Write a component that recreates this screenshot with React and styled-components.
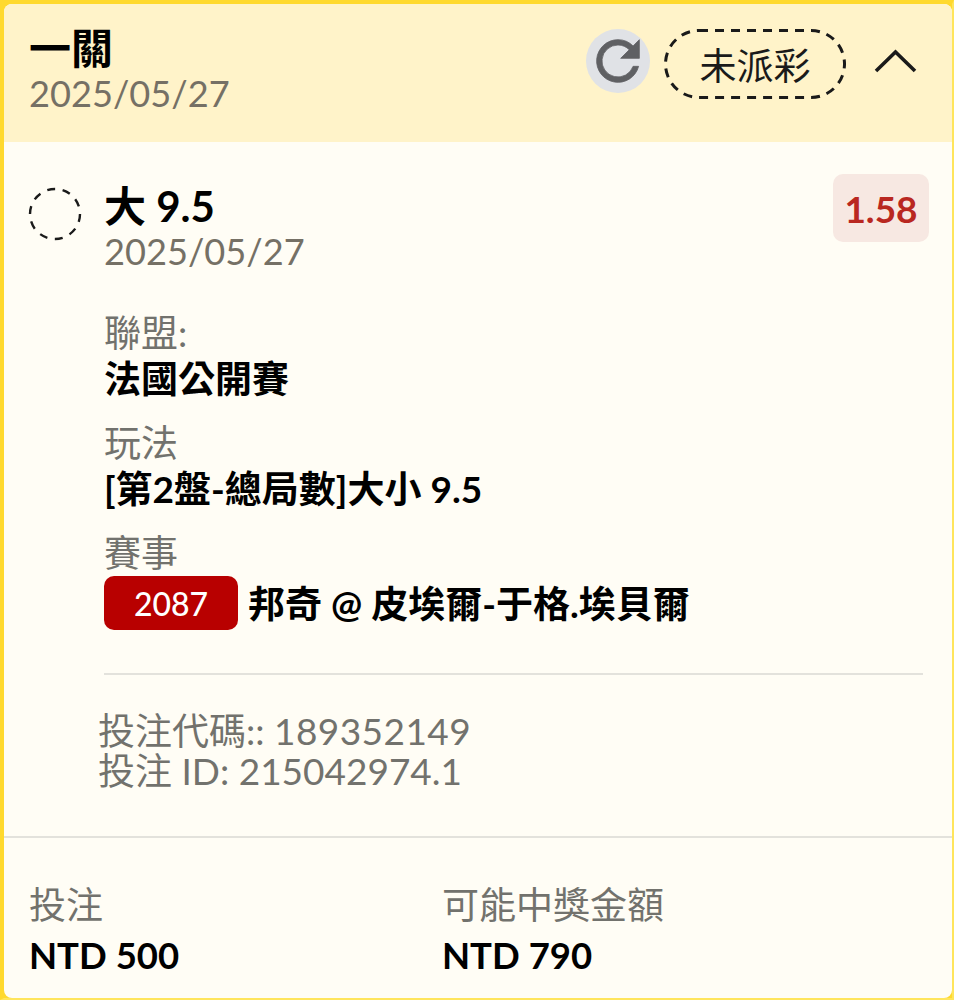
import React from 'react'
import styled, { createGlobalStyle } from 'styled-components'

const FONT = `Lato, "Noto Sans CJK TC", sans-serif`

const GlobalStyle = createGlobalStyle`
  html, body {
    margin: 0;
    padding: 0;
    background: #fffdf5;
  }
  * {
    box-sizing: border-box;
  }
`

const RefreshIcon = () => (
  <svg width="64" height="64" viewBox="0 0 24 24" fill="#5f6063" stroke="#5f6063" strokeWidth="0.3">
    <path d="M17.65 6.35A7.95 7.95 0 0 0 12 4a8 8 0 1 0 7.73 10h-2.08A6 6 0 1 1 12 6c1.66 0 3.14.69 4.22 1.78L13 11h7V4l-2.35 2.35z" />
  </svg>
)

const ChevronUp = () => (
  <svg width="43" height="26" viewBox="0 0 43 26" fill="none" stroke="#1a1a1a" strokeWidth="3.6">
    <path d="M2 23 L21.5 4 L41 23" />
  </svg>
)

const DashedPill = () => (
  <PillOutline width="182" height="70" viewBox="0 0 182 70" fill="none" stroke="#1a1a1a" strokeWidth="3" strokeDasharray="9 7">
    <rect x="1.5" y="1.5" width="179" height="67" rx="33.5" />
  </PillOutline>
)

const DashedCircle = () => (
  <CircleMark width="54" height="54" viewBox="0 0 54 54" fill="none" stroke="#1a1a1a" strokeWidth="2.4" strokeDasharray="8 7.6">
    <circle cx="27" cy="27" r="25" />
  </CircleMark>
)

export default function App() {
  return (
    <>
      <GlobalStyle />
      <Card>
        <Inner>
          <Header>
            <div>
              <Title>一關</Title>
              <SubDate>2025/05/27</SubDate>
            </div>
            <HeaderActions>
              <RefreshButton>
                <RefreshIcon />
              </RefreshButton>
              <StatusPill>
                <DashedPill />
                未派彩
              </StatusPill>
              <Toggle>
                <ChevronUp />
              </Toggle>
            </HeaderActions>
          </Header>

          <Body>
            <SelectionRow>
              <DashedCircle />
              <SelectionText>
                <Title>大 9.5</Title>
                <SubDate>2025/05/27</SubDate>
              </SelectionText>
              <Odds>1.58</Odds>
            </SelectionRow>

            <Details>
              <Field>
                <Label>聯盟:</Label>
                <Value>法國公開賽</Value>
              </Field>
              <Field>
                <Label>玩法</Label>
                <Value>[第2盤-總局數]大小 9.5</Value>
              </Field>
              <Field>
                <Label>賽事</Label>
                <MatchRow>
                  <MatchBadge>2087</MatchBadge>
                  <MatchName>邦奇 @ 皮埃爾-于格.埃貝爾</MatchName>
                </MatchRow>
              </Field>
            </Details>

            <Divider />

            <Codes>
              <div>投注代碼:: <CodeNumber>189352149</CodeNumber></div>
              <div>投注 ID: 215042974.1</div>
            </Codes>
          </Body>

          <Footer>
            <FooterCol>
              <Label>投注</Label>
              <Amount>NTD 500</Amount>
            </FooterCol>
            <FooterCol>
              <Label>可能中獎金額</Label>
              <Amount>NTD 790</Amount>
            </FooterCol>
          </Footer>
        </Inner>
      </Card>
    </>
  )
}

const Card = styled.div`
  width: 954px;
  height: 1000px;
  border: solid;
  border-width: 4px 2px 2px 4px;
  border-color: #ffd92e #ffe55c #ffe55c #ffd92e;
  background: #ffd92e;
  font-family: ${FONT};
`

const Inner = styled.div`
  height: 100%;
  display: flex;
  flex-direction: column;
  overflow: hidden;
  border-radius: 8px;
  background: #fffdf5;
`

const Header = styled.div`
  height: 138px;
  flex-shrink: 0;
  display: flex;
  justify-content: space-between;
  align-items: flex-start;
  padding: 23px 35px 0 25px;
  background: #fff3c9;
`

const Title = styled.div`
  font-size: 42px;
  line-height: 42px;
  font-weight: 700;
  color: #000;
`

const SubDate = styled.div`
  margin-top: 2px;
  font-size: 36.2px;
  line-height: 44px;
  color: #757065;
`

const HeaderActions = styled.div`
  display: flex;
  align-items: center;
  margin-top: 2px;
`

const RefreshButton = styled.div`
  width: 64px;
  height: 64px;
  margin-bottom: 6px;
  border-radius: 50%;
  background: #e0e2e6;
  display: flex;
  align-items: center;
  justify-content: center;
`

const StatusPill = styled.div`
  position: relative;
  width: 182px;
  height: 70px;
  margin-left: 14px;
  display: flex;
  align-items: center;
  justify-content: center;
  font-size: 37px;
  color: #1a1a1a;
`

const PillOutline = styled.svg`
  position: absolute;
  top: 0;
  left: 0;
`

const Toggle = styled.div`
  margin: 0 0 6px 28px;
  display: flex;
`

const Body = styled.div`
  flex: 1;
  padding: 43px 23px 0 24px;
`

const SelectionRow = styled.div`
  display: flex;
  align-items: flex-start;
`

const CircleMark = styled.svg`
  margin-top: 2px;
  flex-shrink: 0;
`

const SelectionText = styled.div`
  flex: 1;
  margin-left: 22px;
`

const Odds = styled.div`
  width: 96px;
  height: 68px;
  margin-top: -11px;
  border-radius: 10px;
  background: #f7e8e2;
  color: #b92720;
  font-size: 37px;
  font-weight: 700;
  display: flex;
  align-items: center;
  justify-content: center;
`

const Details = styled.div`
  margin: 37px 0 0 76px;
  display: flex;
  flex-direction: column;
  gap: 18px;
`

const Field = styled.div`
  display: flex;
  flex-direction: column;
`

const Label = styled.div`
  font-size: 37px;
  line-height: 46px;
  color: #72726d;
`

const Value = styled.div`
  font-size: 37px;
  line-height: 46px;
  font-weight: 700;
  color: #000;
`

const MatchRow = styled.div`
  display: flex;
  align-items: center;
  gap: 10px;
`

const MatchName = styled(Value)`
  margin-top: 2px;
`

const MatchBadge = styled.div`
  width: 134px;
  height: 54px;
  border-radius: 10px;
  background: #b80000;
  color: #fff;
  font-size: 32px;
  font-weight: 500;
  display: flex;
  align-items: center;
  justify-content: center;
`

const Divider = styled.div`
  height: 2px;
  margin: 43px 0 0 76px;
  width: 819px;
  background: #e3e2dc;
`

const Codes = styled.div`
  margin: 36px 0 0 70px;
  font-size: 37px;
  line-height: 40px;
  color: #72726d;
`

const CodeNumber = styled.span`
  letter-spacing: 0.45px;
`

const Footer = styled.div`
  height: 162px;
  flex-shrink: 0;
  display: grid;
  grid-template-columns: 413px 1fr;
  padding: 44px 24px 0 25px;
  border-top: 2px solid #e3e2dc;
`

const FooterCol = styled.div`
  display: flex;
  flex-direction: column;
`

const Amount = styled.div`
  font-size: 36.5px;
  line-height: 54px;
  font-weight: 700;
  color: #000;
`
